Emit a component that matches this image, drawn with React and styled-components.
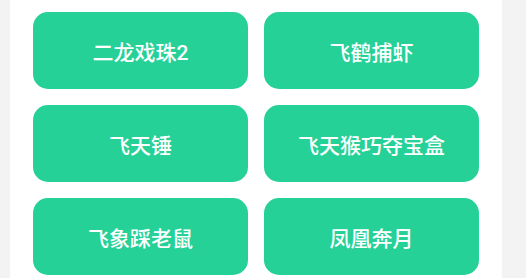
import React from "react";
import styled, { createGlobalStyle } from "styled-components";

const GlobalStyle = createGlobalStyle`
  html, body {
    margin: 0;
    padding: 0;
    background: #f2f3f2;
    font-family: Roboto, "Noto Sans CJK SC", sans-serif;
  }
`;

const Page = styled.div`
  width: 526px;
  height: 278px;
  overflow: hidden;
  display: flex;
  padding-left: 10px;
  box-sizing: border-box;
`;

const Panel = styled.div`
  width: 492px;
  height: 100%;
  background: #ffffff;
  box-sizing: border-box;
  padding: 12px 0 0 23px;
`;

const Grid = styled.div`
  display: grid;
  grid-template-columns: 215px 215px;
  grid-auto-rows: 77px;
  column-gap: 16px;
  row-gap: 16px;
`;

const GameButton = styled.button`
  border: none;
  border-radius: 15px;
  background: #25d197;
  color: #ffffff;
  font-family: Roboto, "Noto Sans CJK SC", sans-serif;
  font-size: 21px;
  font-weight: 500;
  display: flex;
  align-items: center;
  justify-content: center;
  padding: 0;
  cursor: pointer;
`;

const games = [
  "二龙戏珠2",
  "飞鹤捕虾",
  "飞天锤",
  "飞天猴巧夺宝盒",
  "飞象踩老鼠",
  "凤凰奔月",
];

export default function App() {
  return (
    <>
      <GlobalStyle />
      <Page>
        <Panel>
          <Grid>
            {games.map((name) => (
              <GameButton key={name}>{name}</GameButton>
            ))}
          </Grid>
        </Panel>
      </Page>
    </>
  );
}
